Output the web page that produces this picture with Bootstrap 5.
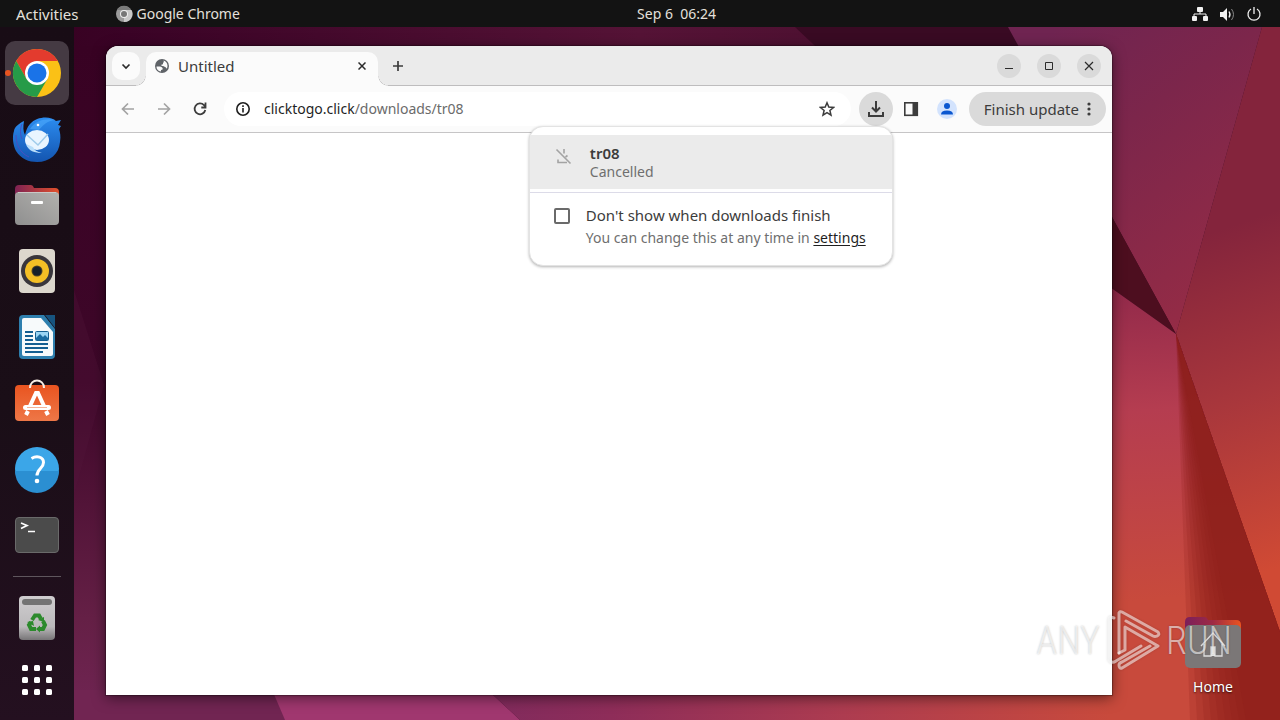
<!DOCTYPE html>
<html lang="en">
<head>
  <meta charset="UTF-8">
  <meta name="viewport" content="width=device-width, initial-scale=1.0">
  <title>Desktop</title>
  <link href="https://cdn.jsdelivr.net/npm/bootstrap@5.3.0/dist/css/bootstrap.min.css" rel="stylesheet">
  <style>
    body {
      font-family: "Noto Sans", "Open Sans", sans-serif;
      font-size: 14px;
      line-height: 20px;
      background-color: #3a0326;
      color: #3c3c3c;
    }

    svg {
      display: block;
      flex: none;
    }

    button {
      background: none;
      border: 0;
      padding: 0;
      color: inherit;
    }

    .wallpaper {
      position: absolute;
      inset: 0;
      width: 100%;
      height: 100%;
      z-index: -1;
    }

    .text-15 {
      font-size: 15px;
    }

    /* top panel */
    .top-panel {
      height: 27px;
      background-color: #131313;
      color: #e4e0dc;
    }

    .panel-side {
      flex: 1 1 0;
    }

    .panel-clock {
      margin-left: 75px;
      margin-right: -16px;
    }

    .panel-menu {
      padding-right: 18px;
    }

    /* dock */
    .dock {
      width: 74px;
      padding: 14px 5px 3px;
      gap: 2px;
      background: linear-gradient(#180c15, #1a0e17 55%, #241020);
    }

    .dock-app {
      position: relative;
      width: 64px;
      height: 64px;
      border-radius: 10px;
    }

    .dock-app.running {
      background-color: #453a43;
    }

    .dock-app.running::before {
      content: "";
      position: absolute;
      left: 0;
      top: 29px;
      width: 6px;
      height: 6px;
      border-radius: 50%;
      background-color: #e95420;
    }

    .dock-line {
      width: 48px;
      height: 1px;
      margin: 7px auto;
      background-color: #5f565d;
    }

    /* browser window */
    .desktop-area {
      padding: 19px 168px 25px 32px;
    }

    .browser {
      background-color: #fff;
      border-radius: 12px 12px 0 0;
      box-shadow: 0 0 1px 1px rgba(0, 0, 0, .3), 0 3px 14px rgba(0, 0, 0, .5);
    }

    .tab-strip {
      height: 40px;
      padding: 6px 11px 0 6px;
      background-color: #ebebeb;
      border-bottom: 1px solid #bebdbe;
      border-radius: 12px 12px 0 0;
    }

    .tab-search {
      width: 28px;
      height: 28px;
      border-radius: 10px;
      background-color: #fbfbfb;
    }

    .page-tab {
      position: relative;
      width: 232px;
      height: 34px;
      margin-left: 6px;
      padding: 0 8px 6px 8px;
      border-radius: 10px 10px 0 0;
      background-color: #fbfbfb;
    }

    .page-tab::before,
    .page-tab::after {
      content: "";
      position: absolute;
      bottom: 0;
      width: 10px;
      height: 10px;
    }

    .page-tab::before {
      left: -10px;
      background: radial-gradient(circle at 0 0, transparent 9px, #bebdbe 9px, #fbfbfb 10px);
    }

    .page-tab::after {
      right: -10px;
      background: radial-gradient(circle at 100% 0, transparent 9px, #bebdbe 9px, #fbfbfb 10px);
    }

    .add-tab {
      width: 28px;
      height: 28px;
      margin-left: 6px;
    }

    .win-btns {
      padding-top: 2px;
    }

    .win-btn {
      width: 24px;
      height: 24px;
      border-radius: 50%;
      background-color: #dadada;
    }

    .toolbar {
      height: 47px;
      padding: 0 6px 0 8px;
      background-color: #fbfbfb;
      border-bottom: 1px solid #c6c5c6;
    }

    .tool-btn {
      width: 28px;
      height: 34px;
    }

    .address {
      height: 34px;
      margin-left: 10px;
      padding: 0 12px 0 10px;
      border-radius: 17px;
      background-color: #fff;
    }

    .address-text {
      outline: 0;
      color: #1f1f1f;
    }

    .address-text span {
      color: #6b6b6b;
    }

    .downloads-btn {
      width: 34px;
      height: 34px;
      border-radius: 50%;
      background-color: #dadada;
    }

    .avatar {
      width: 20px;
      height: 20px;
      margin: 0 12px;
      border-radius: 50%;
      background-color: #d3e3fd;
      overflow: hidden;
    }

    .update-btn {
      height: 34px;
      padding: 0 15px;
      border-radius: 17px;
      background-color: #dadada;
    }

    /* downloads bubble */
    .bubble {
      position: absolute;
      top: 100%;
      right: 0;
      width: 364px;
      padding: 8px 0 18px;
      border: 1px solid #e3e3e3;
      border-radius: 14px;
      background-color: #fff;
      box-shadow: 0 1px 3px rgba(0, 0, 0, .3);
      z-index: 10;
    }

    .bubble-item {
      height: 54px;
      padding: 8px 24px 0;
      background-color: #ebebeb;
    }

    .bubble-line {
      height: 1px;
      margin: 3px 0 12px;
      background-color: #dcdbe8;
    }

    .bubble-title {
      font-size: 15px;
      line-height: 20px;
    }

    .bubble-note {
      line-height: 18px;
      color: #6f6f6f;
    }

    .bubble-note a {
      color: #1f1f1f;
      text-underline-offset: 2px;
    }

    .quiet-check {
      appearance: none;
      width: 16px;
      height: 16px;
      margin: 3px 16px 0 0;
      border: 2px solid #6a6a6a;
      border-radius: 2px;
    }

    /* free items on the desktop */
    .home-icon {
      position: absolute;
      right: 32px;
      bottom: 23px;
      width: 70px;
      gap: 6px;
      color: #fff;
      text-shadow: 0 1px 2px rgba(0, 0, 0, .7);
    }

    .stamp {
      position: absolute;
      right: 48px;
      bottom: 46px;
      height: 66px;
      gap: 5px;
      z-index: 20;
      color: rgba(255, 255, 255, .6);
      font-family: "Roboto Condensed", "Liberation Sans Narrow", Roboto, sans-serif;
      font-size: 38px;
      font-weight: 300;
      pointer-events: none;
      text-shadow: 0 0 2px rgba(0, 0, 0, .25);
    }

    .stamp svg {
      filter: drop-shadow(0 0 1px rgba(0, 0, 0, .25));
    }
  </style>
</head>
<body class="vh-100 overflow-hidden position-relative d-flex flex-column">

  <svg class="wallpaper" viewBox="0 0 1280 720" preserveAspectRatio="none" aria-hidden="true">
    <defs>
      <linearGradient id="wTop" x1="0" x2="1" y1="0" y2="0"><stop offset="0" stop-color="#36001f"/><stop offset=".1" stop-color="#3a0326"/><stop offset=".5" stop-color="#551336"/><stop offset="1" stop-color="#3c0a26"/></linearGradient>
      <linearGradient id="wLeft" x1="0" x2="0" y1="0" y2="1"><stop offset="0" stop-color="#380223"/><stop offset=".5" stop-color="#3e0729"/><stop offset=".85" stop-color="#652046"/><stop offset="1" stop-color="#712554"/></linearGradient>
      <linearGradient id="wBottom" x1="0" x2=".88" y1="0" y2="0"><stop offset="0" stop-color="#7c2a5e"/><stop offset=".25" stop-color="#8e2d59"/><stop offset=".6" stop-color="#ad3c50"/><stop offset="1" stop-color="#c84a3c"/></linearGradient>
      <linearGradient id="wViolet" x1=".2" x2=".8" y1="0" y2="1"><stop offset="0" stop-color="#6f2451"/><stop offset=".35" stop-color="#7c264b"/><stop offset="1" stop-color="#972c45"/></linearGradient>
      <linearGradient id="wRight" gradientUnits="userSpaceOnUse" x1="1190" y1="240" x2="1300" y2="560"><stop offset="0" stop-color="#84243c"/><stop offset=".5" stop-color="#a9373c"/><stop offset="1" stop-color="#d04a34"/></linearGradient>
      <linearGradient id="wRed" gradientUnits="userSpaceOnUse" x1="1130" y1="285" x2="1150" y2="600"><stop offset="0" stop-color="#91294a"/><stop offset=".4" stop-color="#b53d50"/><stop offset="1" stop-color="#c84a3c"/></linearGradient>
    </defs>
    <rect width="1280" height="720" fill="url(#wTop)"/>
    <path d="M795 27 H1010 L1112 220 V290 L830 60z" fill="#390a23"/>
    <rect y="46" width="110" height="674" fill="url(#wLeft)"/>
    <path d="M74 290 L104 385 L74 495z" fill="#53163b" opacity=".3"/>
    <rect x="74" y="690" width="300" height="30" fill="#712552"/>
    <path d="M255 650 H445 L520 720 H285z" fill="#a0376f"/>
    <path d="M445 650 H1200 V720 H520z" fill="url(#wBottom)"/>
    <path d="M1008 27 H1262 L1176 334 L1112 217z" fill="url(#wViolet)"/>
    <path d="M1262 27 H1280 V632 L1176 334z" fill="url(#wRight)"/>
    <path d="M1100 195 L1176 334 L1100 280z" fill="#4d0e1f"/>
    <path d="M1100 280 L1176 334 L1280 632 V720 H1112 V280z" fill="url(#wRed)"/>
    <!-- fold shadow, one slice on top of the other -->
    <g fill="#8c2019" fill-opacity=".2">
      <path d="M1176 334 L1280 632 V720 H1190z"/>
      <path d="M1176 334 L1280 632 V720 H1197z"/>
      <path d="M1176 334 L1280 632 V720 H1204z"/>
      <path d="M1176 334 L1280 632 V720 H1211z"/>
      <path d="M1176 334 L1280 632 V720 H1218z"/>
      <path d="M1176 334 L1280 632 V720 H1225z"/>
      <path d="M1176 334 L1280 632 V720 H1232z"/>
      <path d="M1176 334 L1280 632 V720 H1239z"/>
      <path d="M1176 334 L1280 632 V720 H1246z"/>
    </g>
  </svg>

  <header class="top-panel d-flex flex-shrink-0 align-items-center">
    <div class="panel-side d-flex align-items-center">
      <button class="text-15 ms-3">Activities</button>
      <button class="d-flex align-items-center ms-4 ps-2">
        <svg class="ms-1" width="18" height="18" viewBox="0 0 18 18">
          <circle cx="9" cy="9" r="8" fill="#9b9b9b"/>
          <path d="M9 9V5h7.500A8 8 0 0 1 9 17z" fill="#c9c9c9"/>
          <path d="M2 5a8 8 0 0 1 14 0H9z" fill="#7a7a7a"/>
          <circle cx="9" cy="9" r="4" fill="#eee"/>
          <circle cx="9" cy="9" r="3" fill="#777"/>
        </svg>
        <span class="ms-1">Google Chrome</span>
      </button>
    </div>
    <button class="panel-clock">Sep 6&nbsp; 06:24</button>
    <div class="panel-side panel-menu d-flex justify-content-end">
      <button class="d-flex align-items-center gap-2" aria-label="System menu">
        <svg width="20" height="16" viewBox="0 0 20 16" fill="#f2f2f2">
          <rect x="7" y="1" width="6" height="5" rx="1"/><rect x="2" y="10" width="5" height="5" rx="1"/><rect x="13" y="10" width="5" height="5" rx="1"/>
          <path d="M4 11V8h12v3M10 5v3" fill="none" stroke="#f2f2f2"/>
        </svg>
        <svg width="20" height="16" viewBox="0 0 20 16">
          <path d="M2 6h3l4-4v13L5 11H2z" fill="#f2f2f2"/>
          <path d="M11 5.500q2 3 0 6" fill="none" stroke="#f2f2f2" stroke-width="1.300"/>
          <path d="M13.500 3q4 5.500 0 11" fill="none" stroke="#888"/>
        </svg>
        <svg width="16" height="16" viewBox="0 0 16 16" fill="none" stroke="#f2f2f2" stroke-width="1.300">
          <path d="M5 3a6 6 0 1 0 6 0M8 1v7"/>
        </svg>
      </button>
    </div>
  </header>

  <div class="d-flex flex-fill">
    <nav class="dock d-flex flex-column" aria-label="Dock">
      <button class="dock-app running" aria-label="Google Chrome">
        <svg width="64" height="64" viewBox="0 0 64 64">
          <circle cx="32" cy="32" r="24" fill="#fbc116"/>
          <path d="M11.200 20A24 24 0 0 1 52.800 20H32L21.600 38z" fill="#e33b2e"/>
          <path d="M11.200 20A24 24 0 0 0 32 56L42.400 38 32 44 21.600 38z" fill="#269b48"/>
          <circle cx="32" cy="32" r="12" fill="#fff"/>
          <circle cx="32" cy="32" r="9.500" fill="#1a73e8"/>
        </svg>
      </button>
      <button class="dock-app" aria-label="Thunderbird">
        <svg width="64" height="64" viewBox="0 0 64 64">
          <defs><linearGradient id="bird" x1="0" x2="0" y1="0" y2="1"><stop offset="0" stop-color="#2b8cf0"/><stop offset="1" stop-color="#1455b0"/></linearGradient></defs>
          <path d="M9 24c-2 6-1 14 2 20 5 8 13 11 21 11 13 0 22-8 23-20 1-6 0-10-1-13l2-3-3-1 3-5-5 1c-5-5-19-5-26 3-3 3-4 7-5 11-2-4-2-8-1-14-4 2-10 6-10 10z" fill="url(#bird)"/>
          <path d="M11 28c0 10 4 18 13 22M17 17c-2 5-2 10 0 15" fill="none" stroke="#4a4fc0" stroke-width="1"/>
          <path d="M25 22c6-9 16-11 25-9-8 1-12 5-16 10z" fill="#55b2ff" opacity=".5"/>
          <ellipse cx="32" cy="33" rx="12" ry="10" fill="#e9f5ff"/>
          <path d="M22 28l11 10 10-11" fill="none" stroke="#9fcbea" stroke-width="1.500"/>
          <path d="M21 37c2 7 9 9 16 9-5-1-8-3-9-6z" fill="#b9defa"/>
          <circle cx="33" cy="18" r="1.300" fill="#fff"/>
        </svg>
      </button>
      <button class="dock-app" aria-label="Files">
        <svg width="64" height="64" viewBox="0 0 64 64">
          <defs>
            <linearGradient id="fold"><stop offset="0" stop-color="#7e2253"/><stop offset="1" stop-color="#e2512c"/></linearGradient>
            <linearGradient id="grey" x1="0" x2="1" y1="1" y2="0"><stop offset="0" stop-color="#8f8f8f"/><stop offset="1" stop-color="#b2b1ae"/></linearGradient>
          </defs>
          <path d="M10 16q0-4 4-4h12q2 0 3 3h21q4 0 4 4v14H10z" fill="url(#fold)"/>
          <rect x="10" y="19" width="44" height="33" rx="4" fill="url(#grey)"/>
          <path d="M13 19.500h38" stroke="#c9c8c6"/>
          <rect x="26" y="28" width="12" height="3" rx="1" fill="#fff"/>
        </svg>
      </button>
      <button class="dock-app" aria-label="Rhythmbox">
        <svg width="64" height="64" viewBox="0 0 64 64">
          <rect x="14" y="10" width="36" height="44" rx="4" fill="#dcd7cd"/>
          <circle cx="32" cy="32" r="16" fill="#39363c"/>
          <circle cx="32" cy="32" r="12" fill="#f4bf25"/>
          <circle cx="32" cy="32" r="5.500" fill="#514427"/>
          <circle cx="32" cy="32" r="4.500" fill="#17202a"/>
        </svg>
      </button>
      <button class="dock-app" aria-label="LibreOffice Writer">
        <svg width="64" height="64" viewBox="0 0 64 64">
          <path d="M18 10h21l11 14v26q0 4-4 4H18q-4 0-4-4V14q0-4 4-4z" fill="#2e7fae"/>
          <path d="M40 10h10v13z" fill="#17547f"/>
          <path d="M19 13h17l12 14v22q0 2-2 2H19q-2 0-2-2V15q0-2 2-2z" fill="#f7fafb"/>
          <path d="M20 27h8M20 31h8M20 35h8M20 39h23M20 43h23M20 47h18" stroke="#155f91" stroke-width="2"/>
          <rect x="30.500" y="26.500" width="13" height="9" rx="1" fill="#9ad4f3" stroke="#155f91"/>
          <path d="M31 35v-2l4-4 3 3 2-2 3 3v2z" fill="#1a6ba0"/>
        </svg>
      </button>
      <button class="dock-app" aria-label="Ubuntu Software">
        <svg width="64" height="64" viewBox="0 0 64 64">
          <defs><linearGradient id="bag" x1="0" x2="0" y1="0" y2="1"><stop offset="0" stop-color="#e95420"/><stop offset="1" stop-color="#ee7747"/></linearGradient></defs>
          <rect x="10" y="14" width="44" height="36" rx="4" fill="url(#bag)"/>
          <path d="M25 17c0-10 14-10 14 0" fill="none" stroke="#f7eee5" stroke-width="2"/>
          <path d="M21 44l2-4M43 44l-2-4M25 35l6-13h2l6 13" fill="none" stroke="#fff" stroke-width="4"/>
          <rect x="18" y="34" width="28" height="5" rx="2.500" fill="#fff"/>
          <path d="M22 36.500h20" stroke="#f5b398"/>
        </svg>
      </button>
      <button class="dock-app" aria-label="Help">
        <svg width="64" height="64" viewBox="0 0 64 64">
          <circle cx="32" cy="32" r="22" fill="#3ba6e8"/>
          <path d="M10 34a22 22 0 0 0 44 0z" fill="#2b8fd2"/>
          <path d="M26.500 21.500c5-3 12-2 12 4 0 6-6.500 6-6.500 13" fill="none" stroke="#fff" stroke-width="3"/>
          <circle cx="32" cy="44" r="2.300" fill="#fff"/>
        </svg>
      </button>
      <button class="dock-app" aria-label="Terminal">
        <svg width="64" height="64" viewBox="0 0 64 64">
          <rect x="10.500" y="14.500" width="43" height="35" rx="3.500" fill="#4b4b4b" stroke="#6a6a6a"/>
          <path d="M16 20l6 2.500-6 3M23 28.500h7" fill="none" stroke="#fff" stroke-width="1.700"/>
        </svg>
      </button>
      <div class="dock-line"></div>
      <button class="dock-app" aria-label="Trash">
        <svg width="64" height="64" viewBox="0 0 64 64">
          <defs><linearGradient id="bin" x1="0" x2="0" y1="0" y2="1"><stop offset="0" stop-color="#cfcdcf"/><stop offset=".7" stop-color="#bbb9bb"/><stop offset="1" stop-color="#777577"/></linearGradient></defs>
          <rect x="14" y="10" width="36" height="44" rx="4" fill="url(#bin)"/>
          <rect x="17" y="13" width="30" height="6" rx="3" fill="#737373"/>
          <g fill="none" stroke="#2c8a2c" stroke-width="4">
            <path d="M27 34l3-4.500h4l2 3.500"/>
            <path d="M38 35l2 4-2 4h-4"/>
            <path d="M31 43h-5l-2-4 2-3"/>
          </g>
          <path d="M33 34l6-3v5zM35 39.500v7l-4-3.500zM22 36l6-1 1 5z" fill="#2c8a2c"/>
        </svg>
      </button>
      <button class="dock-app" aria-label="Show Applications">
        <svg width="64" height="64" viewBox="0 4 64 64" fill="#fff">
          <rect x="17" y="17" width="6" height="6" rx="1.500"/><rect x="29" y="17" width="6" height="6" rx="1.500"/><rect x="41" y="17" width="6" height="6" rx="1.500"/>
          <rect x="17" y="29" width="6" height="6" rx="1.500"/><rect x="29" y="29" width="6" height="6" rx="1.500"/><rect x="41" y="29" width="6" height="6" rx="1.500"/>
          <rect x="17" y="41" width="6" height="6" rx="1.500"/><rect x="29" y="41" width="6" height="6" rx="1.500"/><rect x="41" y="41" width="6" height="6" rx="1.500"/>
        </svg>
      </button>
    </nav>

    <main class="desktop-area d-flex flex-fill position-relative">
      <section class="browser flex-fill d-flex flex-column">
        <div class="tab-strip d-flex">
          <button class="tab-search d-flex align-items-center justify-content-center" aria-label="Search tabs">
            <svg width="10" height="10" viewBox="0 0 10 10" fill="none" stroke="#2b2b2b" stroke-width="1.700"><path d="M1.500 3.500L5 7l3.500-3.500"/></svg>
          </button>
          <div class="page-tab d-flex align-items-center">
            <svg width="16" height="16" viewBox="0 0 16 16">
              <circle cx="8" cy="8" r="7" fill="#5f6368"/>
              <path d="M2.500 8.500c2 0 5-.5 6 1.500.5 1 0 2-1.500 2v1.500C4 13.200 2.300 11 2.500 8.500zM9.500 2.500c2.500.5 4 2.700 4 5.500 0 1-.3 2-.8 2.800-.7-1-1-2-2.200-2-.8-1-1.700-.8-3-.8V6.500c1.500 0 1.500-.5 1.500-1.500.8-.5 1-1.500.5-2.500z" fill="#fbfbfb"/>
            </svg>
            <span class="text-15 ms-2 flex-fill">Untitled</span>
            <button class="d-flex p-1" aria-label="Close tab">
              <svg width="8" height="8" viewBox="0 0 8 8" stroke="#2b2b2b" stroke-width="1.500"><path d="M.5.5l7 7M7.500.5l-7 7"/></svg>
            </button>
          </div>
          <button class="add-tab d-flex align-items-center justify-content-center" aria-label="New tab">
            <svg width="12" height="12" viewBox="0 0 12 12" stroke="#3c3c3c" stroke-width="1.700"><path d="M6 1v10M1 6h10"/></svg>
          </button>
          <div class="win-btns ms-auto d-flex gap-3">
            <button class="win-btn d-flex align-items-center justify-content-center" aria-label="Minimize">
              <svg width="10" height="10" viewBox="0 0 10 10" stroke="#2b2b2b"><path d="M1 7.500h8"/></svg>
            </button>
            <button class="win-btn d-flex align-items-center justify-content-center" aria-label="Maximize">
              <svg width="10" height="10" viewBox="0 0 10 10" fill="none" stroke="#2b2b2b"><path d="M1.500 1.500h7v7h-7z"/></svg>
            </button>
            <button class="win-btn d-flex align-items-center justify-content-center" aria-label="Close">
              <svg width="10" height="10" viewBox="0 0 10 10" stroke="#2b2b2b" stroke-width="1.200"><path d="M1 1l8 8M9 1l-8 8"/></svg>
            </button>
          </div>
        </div>

        <div class="toolbar d-flex align-items-center">
          <div class="d-flex gap-2">
            <button class="tool-btn d-flex align-items-center justify-content-center" aria-label="Back">
              <svg width="14" height="14" viewBox="0 0 14 14" fill="none" stroke="#a3a3a3" stroke-width="1.700"><path d="M13 7H2M7 1.500L1.500 7 7 12.500"/></svg>
            </button>
            <button class="tool-btn d-flex align-items-center justify-content-center" aria-label="Forward">
              <svg width="14" height="14" viewBox="0 0 14 14" fill="none" stroke="#a3a3a3" stroke-width="1.700"><path d="M1 7h11M7 1.500L12.500 7 7 12.500"/></svg>
            </button>
            <button class="tool-btn d-flex align-items-center justify-content-center" aria-label="Reload">
              <svg width="14" height="14" viewBox="0 0 14 14" fill="none" stroke="#3c3c3c" stroke-width="1.800"><path d="M12.300 8A5.400 5.400 0 1 1 11 3.200L13 5.200M12.500 .5v5H8.300"/></svg>
            </button>
          </div>
          <div class="address d-flex flex-fill align-items-center">
            <button class="d-flex" aria-label="Site information">
              <svg width="18" height="18" viewBox="0 0 18 18" fill="none" stroke="#1f1f1f" stroke-width="1.600"><circle cx="9" cy="9" r="6.200"/><path d="M9 8v4.500M9 5.200v1.700"/></svg>
            </button>
            <div class="address-text flex-fill ms-2 ps-1" role="textbox" aria-label="Address" contenteditable="true" spellcheck="false">clicktogo.click<span>/downloads/tr08</span></div>
            <button class="d-flex me-1" aria-label="Bookmark this tab">
              <svg width="16" height="16" viewBox="0 0 16 16" fill="none" stroke="#3c3c3c" stroke-width="1.500"><path d="M8 1.800l1.800 4.300 4.700.4-3.600 3 1.100 4.600L8 11.700l-4 2.400 1.100-4.600-3.600-3 4.700-.4z"/></svg>
            </button>
          </div>
          <div class="position-relative ms-2">
            <button class="downloads-btn d-flex align-items-center justify-content-center" aria-label="Downloads">
              <svg width="18" height="18" viewBox="0 0 18 18" fill="none" stroke="#3c3c3c" stroke-width="2"><path d="M9 1v10M5 7.500l4 4 4-4M2 12v4h14v-4"/></svg>
            </button>
            <div class="bubble">
              <div class="bubble-item d-flex">
                <svg class="mt-1" width="20" height="20" viewBox="0 0 20 20" fill="none" stroke="#a3a3a3" stroke-width="1.600">
                  <path d="M2.500 2.500l14 14M10 2v4.500M13.500 8.500l-2 1.500M4 12.500v3h9"/>
                </svg>
                <div class="ms-3">
                  <div class="bubble-title fw-semibold">tr08</div>
                  <div class="bubble-note">Cancelled</div>
                </div>
              </div>
              <div class="bubble-line"></div>
              <div class="d-flex ps-4">
                <input class="quiet-check flex-shrink-0" type="checkbox" id="quiet">
                <div>
                  <label class="bubble-title d-block" for="quiet">Don't show when downloads finish</label>
                  <div class="bubble-note mt-1">You can change this at any time in <a href="#">settings</a></div>
                </div>
              </div>
            </div>
          </div>
          <button class="tool-btn ms-1 d-flex align-items-center justify-content-center" aria-label="Side panel">
            <svg width="16" height="16" viewBox="0 0 16 16"><rect x="1.800" y="1.800" width="12.500" height="12.500" fill="none" stroke="#3c3c3c" stroke-width="1.600"/><path d="M9.500 2h5v12h-5z" fill="#3c3c3c"/></svg>
          </button>
          <button class="avatar" aria-label="Profile">
            <svg width="20" height="20" viewBox="0 0 20 20" fill="#0b57d0"><circle cx="10" cy="7" r="3"/><path d="M4 15.500q0-4 6-4t6 4z"/></svg>
          </button>
          <button class="update-btn text-15 d-flex align-items-center gap-2">
            Finish update
            <svg width="4" height="16" viewBox="0 0 4 16" fill="#3c3c3c"><circle cx="2" cy="3" r="1.600"/><circle cx="2" cy="8" r="1.600"/><circle cx="2" cy="13" r="1.600"/></svg>
          </button>
        </div>
      </section>

      <a class="home-icon d-flex flex-column align-items-center text-decoration-none" href="#">
        <svg width="58" height="56" viewBox="0 0 58 56">
          <defs><linearGradient id="homeTab"><stop offset="0" stop-color="#7b1f5b"/><stop offset=".5" stop-color="#9e2a44"/><stop offset="1" stop-color="#ea5420"/></linearGradient></defs>
          <path d="M1 7q0-5 5-5h14q3 0 4 3h28q5 0 5 5v12H1z" fill="url(#homeTab)"/>
          <rect x="1" y="10" width="56" height="43" rx="5" fill="#7b7777"/>
          <path d="M17 31l12-13 12 13M20 29v12h7v-9h4v9h7V29" fill="none" stroke="#dedede" stroke-width="1.300"/>
          <path d="M27 32h4v9h-4z" fill="#e8e8e8"/>
        </svg>
        <span>Home</span>
      </a>

      <div class="stamp d-flex align-items-center">
        <span>ANY</span>
        <svg width="56" height="66" viewBox="0 0 56 66" fill="none" stroke="rgba(255,255,255,.55)" stroke-width="3" stroke-linejoin="round" stroke-linecap="round">
          <path d="M14 45V5q1-2 3-1L53 24q2 3-1 4-2 1-4 0L21 13"/>
          <path d="M14 45L20 42V19L53 38 17 60q-3 1-3-3 0-2 3-3L45 38"/>
          <path d="M9 10Q4 8 4 12V52q3 4 7 1L36 38"/>
        </svg>
        <span>RUN</span>
      </div>
    </main>
  </div>

  <script src="https://cdn.jsdelivr.net/npm/bootstrap@5.3.0/dist/js/bootstrap.bundle.min.js"></script>
</body>
</html>
